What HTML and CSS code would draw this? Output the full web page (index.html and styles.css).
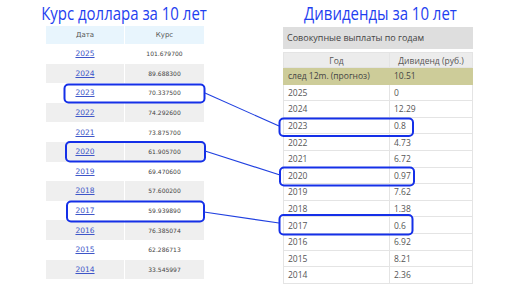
FILE: index.html
```html
<!DOCTYPE html>
<html lang="ru">
<head>
<meta charset="utf-8">
<link rel="stylesheet" href="styles.css">
</head>
<body>
<div class="page">
  <section class="col col-left">
    <h1 class="title">Курс доллара за 10 лет</h1>
    <table class="rates">
      <thead><tr><th>Дата</th><th>Курс</th></tr></thead>
      <tbody>
        <tr><td><a href="#">2025</a></td><td>101.679700</td></tr>
        <tr class="alt"><td><a href="#">2024</a></td><td>89.688300</td></tr>
        <tr><td><a href="#">2023</a></td><td>70.337500</td></tr>
        <tr class="alt"><td><a href="#">2022</a></td><td>74.292600</td></tr>
        <tr><td><a href="#">2021</a></td><td>73.875700</td></tr>
        <tr class="alt"><td><a href="#">2020</a></td><td>61.905700</td></tr>
        <tr><td><a href="#">2019</a></td><td>69.470600</td></tr>
        <tr class="alt"><td><a href="#">2018</a></td><td>57.600200</td></tr>
        <tr><td><a href="#">2017</a></td><td>59.939890</td></tr>
        <tr class="alt"><td><a href="#">2016</a></td><td>76.385074</td></tr>
        <tr><td><a href="#">2015</a></td><td>62.286713</td></tr>
        <tr class="alt"><td><a href="#">2014</a></td><td>33.545997</td></tr>
      </tbody>
    </table>
  </section>
  <section class="col col-right">
    <h1 class="title">Дивиденды за 10 лет</h1>
    <div class="caption">Совокупные выплаты по годам</div>
    <table class="divs">
      <thead><tr><th>Год</th><th>Дивиденд (руб.)</th></tr></thead>
      <tbody>
        <tr class="forecast"><td>след 12m. (прогноз)</td><td>10.51</td></tr>
        <tr><td>2025</td><td>0</td></tr>
        <tr><td>2024</td><td>12.29</td></tr>
        <tr><td>2023</td><td>0.8</td></tr>
        <tr><td>2022</td><td>4.73</td></tr>
        <tr><td>2021</td><td>6.72</td></tr>
        <tr><td>2020</td><td>0.97</td></tr>
        <tr><td>2019</td><td>7.62</td></tr>
        <tr><td>2018</td><td>1.38</td></tr>
        <tr><td>2017</td><td>0.6</td></tr>
        <tr><td>2016</td><td>6.92</td></tr>
        <tr><td>2015</td><td>8.21</td></tr>
        <tr><td>2014</td><td>2.36</td></tr>
      </tbody>
    </table>
  </section>
  <svg class="overlay" width="516" height="290" viewBox="0 0 516 290">
    <g class="marks">
      <rect x="64.5" y="84.5" width="140" height="18" rx="4"/>
      <rect x="66" y="142" width="139" height="19.5" rx="4"/>
      <rect x="67" y="201.5" width="137" height="20" rx="4"/>
      <rect x="279.5" y="118.5" width="133.5" height="17.5" rx="4"/>
      <rect x="280" y="167.5" width="134" height="18" rx="4"/>
      <rect x="279.5" y="215" width="133" height="19.5" rx="4"/>
    </g>
    <g class="links">
      <line x1="205" y1="93" x2="279" y2="126"/>
      <line x1="205" y1="151" x2="280" y2="175"/>
      <line x1="204" y1="212" x2="279" y2="223"/>
    </g>
  </svg>
</div>
</body>
</html>
```

FILE: styles.css
```css
html, body {
  margin: 0;
  padding: 0;
  background: #ffffff;
}

.page {
  position: relative;
  width: 516px;
  height: 290px;
  display: flex;
  align-items: flex-start;
  padding-left: 46px;
  box-sizing: border-box;
  gap: 79px;
  overflow: hidden;
}

.col {
  display: flex;
  flex-direction: column;
  align-items: stretch;
}

.col-left { width: 158px; }
.col-right { width: 190px; }

.title {
  margin: 0 -20px;
  height: 26px;
  line-height: 26px;
  font-family: "Open Sans", "Noto Sans", sans-serif;
  font-weight: 400;
  font-size: 17.5px;
  color: #1f3ff0;
  text-align: center;
  white-space: nowrap;
  transform: scaleX(0.855);
}

.col-left .title { margin-left: -22px; margin-right: -20px; }
.col-right .title { height: 27px; line-height: 27px; margin-left: -15px; margin-right: -20px; }

/* Left table */
.rates {
  width: 158px;
  border-collapse: collapse;
  table-layout: fixed;
  font-family: "DejaVu Sans", Verdana, sans-serif;
}

.rates th, .rates td {
  padding: 0;
  text-align: center;
}

.rates th:first-child, .rates td:first-child {
  width: 78px;
  border-right: 1px solid #ffffff;
}

.rates thead tr {
  height: 18px;
  background: #e8f5fd;
}

.rates th {
  font-weight: 400;
  font-size: 7px;
  color: #555555;
}

.rates tbody tr { height: 19.6px; }
.rates tbody tr.alt { background: #efefef; }

.rates td {
  font-size: 6px;
  color: #444444;
}

.rates a {
  font-size: 7.5px;
  color: #3d55c8;
  text-decoration: underline;
}

/* Right panel */
.caption {
  height: 22px;
  line-height: 22px;
  background: #dedede;
  padding-left: 4px;
  font-family: "Open Sans", "Noto Sans", sans-serif;
  font-size: 9px;
  color: #444444;
  margin-bottom: 3px;
}

.divs {
  width: 190px;
  border-collapse: collapse;
  table-layout: fixed;
  font-family: "Open Sans", "Noto Sans", sans-serif;
  font-size: 8.5px;
  color: #555555;
}

.divs th, .divs td {
  border: 1px solid #e4e4e4;
  padding: 0 0 0 4px;
  text-align: left;
}

.divs th:first-child, .divs td:first-child { width: 105px; }

.divs thead tr {
  height: 15px;
  background: #ececec;
}

.divs th {
  font-weight: 400;
  text-align: center;
  padding: 0;
}

.divs tbody tr { height: 16.6px; }
.divs tbody tr.forecast { background: #cdcc99; }
.divs tbody tr.forecast td { border-color: #cdcc99; color: #444444; }

/* Overlay annotations */
.overlay {
  position: absolute;
  left: 0;
  top: 0;
  pointer-events: none;
}

.marks rect {
  fill: none;
  stroke: #1530e8;
  stroke-width: 2;
}

.links line {
  stroke: #2040e0;
  stroke-width: 1.1;
}
```
